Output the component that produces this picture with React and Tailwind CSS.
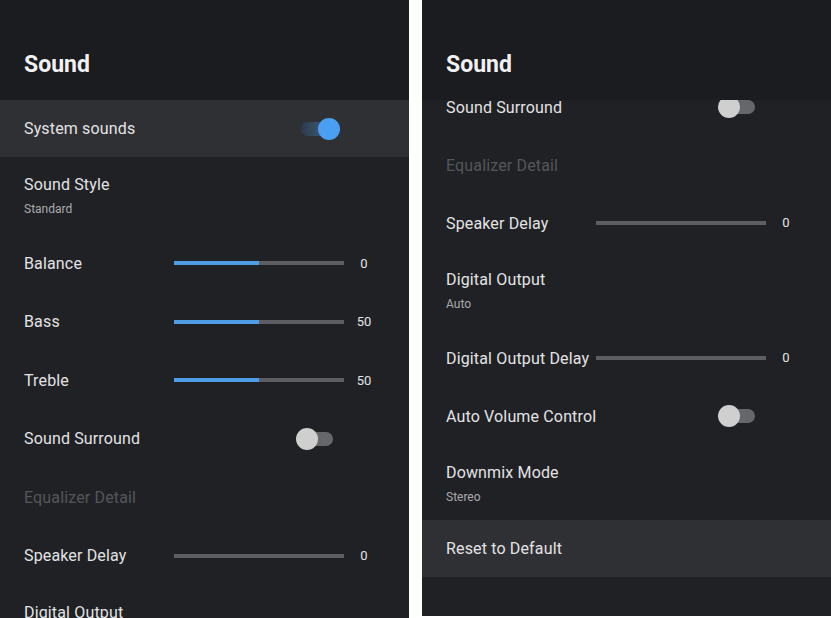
const LEFT_ROWS = [
  { kind: "toggle", label: "System sounds", on: true, focused: true, h: "h-[57px]" },
  { kind: "sub", label: "Sound Style", sub: "Standard" },
  { kind: "slider", label: "Balance", fill: 50, value: "0" },
  { kind: "slider", label: "Bass", fill: 50, value: "50" },
  { kind: "slider", label: "Treble", fill: 50, value: "50" },
  { kind: "toggle", label: "Sound Surround", on: false },
  { kind: "disabled", label: "Equalizer Detail" },
  { kind: "slider", label: "Speaker Delay", fill: 0, value: "0" },
  { kind: "sub", label: "Digital Output", sub: "Auto" },
];

const RIGHT_ROWS = [
  { kind: "toggle", label: "Sound Surround", on: false },
  { kind: "disabled", label: "Equalizer Detail" },
  { kind: "slider", label: "Speaker Delay", fill: 0, value: "0" },
  { kind: "sub", label: "Digital Output", sub: "Auto" },
  { kind: "slider", label: "Digital Output Delay", fill: 0, value: "0" },
  { kind: "toggle", label: "Auto Volume Control", on: false },
  { kind: "sub", label: "Downmix Mode", sub: "Stereo", h: "h-[75px]" },
  { kind: "plain", label: "Reset to Default", focused: true, h: "h-[57px]" },
];

function Toggle({ on }) {
  return (
    <div className="relative flex h-[22px] w-[44px] items-center">
      <div
        className={`ml-[5px] h-[14px] w-[32px] rounded-full ${
          on ? "bg-gradient-to-r from-[#2c3a4a] to-[#41648a]" : "bg-[#66676a]"
        }`}
      />
      <div
        className={`absolute top-0 h-[22px] w-[22px] rounded-full ${
          on ? "left-[22px] bg-[#4a9ff2]" : "left-0 bg-[#cfcfd0]"
        }`}
      />
    </div>
  );
}

function Slider({ fill, value }) {
  return (
    <div className="flex items-center">
      <div className="h-[4px] w-[170px] bg-[#5d5e61]">
        <div className="h-full bg-[#4f9de6]" style={{ width: `${fill}%` }} />
      </div>
      <div className="w-[40px] text-center text-[13px] text-[#e4e4e6]">{value}</div>
    </div>
  );
}

function Row({ row, rowH }) {
  const bg = row.focused ? "bg-[#2f3033]" : "";

  if (row.kind === "sub") {
    return (
      <div className={`${row.h || "h-[77px]"} shrink-0 px-6 pt-[18px] ${bg}`}>
        <div className="text-[16px] leading-[19px] tracking-[0.15px] text-[#e3e3e5]">{row.label}</div>
        <div className="mt-[8px] text-[12px] leading-[14px] text-[#a9aaad]">{row.sub}</div>
      </div>
    );
  }

  return (
    <div className={`${row.h || rowH} flex shrink-0 items-center pl-6 ${bg}`}>
      <div
        className={`w-[150px] shrink-0 whitespace-nowrap text-[16px] leading-[19px] tracking-[0.15px] ${
          row.kind === "disabled" ? "text-[#54565a]" : "text-[#e3e3e5]"
        }`}
      >
        {row.label}
      </div>
      {row.kind === "slider" && <Slider fill={row.fill} value={row.value} />}
      {row.kind === "toggle" && (
        <div className="ml-[122px]">
          <Toggle on={row.on} />
        </div>
      )}
    </div>
  );
}

function Panel({ rows, rowH, listOffset, height }) {
  return (
    <div className={`flex w-[409px] shrink-0 flex-col overflow-hidden bg-[#202124] ${height}`}>
      <div className="relative z-10 h-[100px] shrink-0 bg-[#1b1c1f] px-6 pt-[52px]">
        <h1 className="text-[23px] font-bold leading-[26px] text-[#f1f1f3]">Sound</h1>
      </div>
      <div className="min-h-0 flex-1 overflow-hidden">
        <div className={`flex flex-col ${listOffset}`}>
          {rows.map((row, i) => (
            <Row key={i} row={row} rowH={rowH} />
          ))}
        </div>
      </div>
    </div>
  );
}

export default function App() {
  return (
    <div
      className="flex h-[618px] w-[831px] items-start gap-[13px] bg-white"
      style={{ fontFamily: "Roboto, 'Noto Sans', sans-serif" }}
    >
      <Panel rows={LEFT_ROWS} rowH="h-[58.5px]" listOffset="mt-0" height="h-[618px]" />
      <Panel rows={RIGHT_ROWS} rowH="h-[58px]" listOffset="-mt-[22px]" height="h-[616px]" />
    </div>
  );
}
